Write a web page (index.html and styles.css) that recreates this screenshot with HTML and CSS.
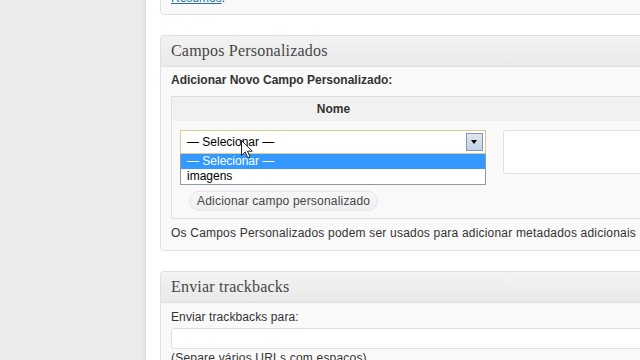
FILE: index.html
```html
<!DOCTYPE html>
<html lang="pt-BR">
<head>
  <meta charset="UTF-8">
  <meta name="viewport" content="width=device-width, initial-scale=1.0">
  <title>Editar Post ‹ Painel</title>
  <link rel="stylesheet" href="styles.css">
</head>
<body>
  <div class="admin">
    <!-- ======= Menu lateral (recolhido à esquerda) ======= -->
    <div class="sidebar"></div>

    <!-- ======= Área de conteúdo ======= -->
    <div class="content">
      <!-- fim do box anterior (Resumos) -->
      <div class="postbox postbox-first">
        <div class="inside">
          <p><a href="#">Resumos</a>.</p>
        </div>
      </div>

      <!-- Campos Personalizados -->
      <div class="postbox">
        <h3 class="hndle">Campos Personalizados</h3>
        <div class="inside">
          <p class="new-field"><strong>Adicionar Novo Campo Personalizado:</strong></p>
          <table class="meta-table">
            <colgroup>
              <col class="col-name">
              <col class="col-value">
            </colgroup>
            <thead>
              <tr>
                <th>Nome</th>
                <th>Valor</th>
              </tr>
            </thead>
            <tbody>
              <tr>
                <td class="cell-select">
                  <!-- select aberto (lista visível) -->
                  <div class="fake-select">
                    <span class="select-text">— Selecionar —</span>
                    <span class="select-arrow"></span>
                    <ul class="select-list">
                      <li class="active">— Selecionar —</li>
                      <li>imagens</li>
                    </ul>
                  </div>
                </td>
                <td class="cell-value"><textarea id="metavalue"></textarea></td>
              </tr>
              <tr>
                <td colspan="2" class="cell-submit">
                  <button class="button" type="button">Adicionar campo personalizado</button>
                </td>
              </tr>
            </tbody>
          </table>
          <p class="desc">Os Campos Personalizados podem ser usados para adicionar metadados adicionais aos posts que você poderá usar no seu tema.</p>
        </div>
      </div>

      <!-- Enviar trackbacks -->
      <div class="postbox">
        <h3 class="hndle">Enviar trackbacks</h3>
        <div class="inside">
          <label for="trackback_url">Enviar trackbacks para:</label>
          <input type="text" id="trackback_url" class="trackback-input">
          <p class="hint">(Separe vários URLs com espaços)</p>
        </div>
      </div>
    </div>

    <!-- ponteiro do mouse sobre o select -->
    <svg class="cursor" width="13" height="19" viewBox="0 0 13 19">
      <path d="M0.5 0.5 L0.5 15.5 L4.2 12 L6.8 17.8 L9 16.8 L6.5 11.2 L11.3 11.2 Z" fill="#fff" stroke="#222" stroke-width="1" stroke-linejoin="round"/>
    </svg>
  </div>
</body>
</html>
```

FILE: styles.css
```css
/* ======= Reset & fonte base ======= */
* {
  box-sizing: border-box;
  margin: 0;
  padding: 0;
}

html, body {
  width: 100%;
  height: 100%;
  overflow: hidden;
  background: #fff;
  color: #333;
  font-family: "Liberation Sans", Arial, sans-serif;
  font-size: 12px;
  line-height: 18px;
}

.admin {
  position: relative;
  display: flex;
  width: 960px;
  height: 100%;
}

/* ======= Menu lateral ======= */
.sidebar {
  flex: 0 0 146px;
  background: linear-gradient(to right, #ececec 0, #ececec 141px, #e2e2e2 145px, #d9d9d9 146px);
}

/* ======= Conteúdo ======= */
.content {
  flex: 1;
  padding-left: 14px;
}

.postbox {
  width: 760px;
  margin-bottom: 20px;
  background: #f9f9f9;
  border: 1px solid #dfdfdf;
  border-radius: 4px;
}
.postbox-first {
  margin-top: -19px;
}
.postbox-first .inside {
  padding: 7px 10px 7px;
}
.postbox-first a {
  color: #21759b;
}

.hndle {
  height: 31px;
  padding-left: 10px;
  font-family: "Liberation Serif", Georgia, serif;
  font-size: 16px;
  font-weight: normal;
  line-height: 30px;
  letter-spacing: 0.2px;
  color: #464646;
  background: linear-gradient(to bottom, #f3f3f3, #e9e9e9);
  border-bottom: 1px solid #dfdfdf;
  border-radius: 4px 4px 0 0;
}

.inside {
  padding: 4px 10px 8px;
}

.new-field {
  margin-bottom: 7px;
}
.new-field strong {
  color: #333;
}

/* ======= Tabela de campos ======= */
.meta-table {
  width: 741px;
  table-layout: fixed;
  border-collapse: separate;
  border-spacing: 0;
  border: 1px solid #dfdfdf;
  background: #f9f9f9;
}
.col-name {
  width: 323px;
}
.col-value {
  width: 416px;
}
.meta-table th {
  height: 24px;
  line-height: 24px;
  font-weight: bold;
  text-align: center;
  color: #333;
  background: #f1f1f1;
}
.cell-select,
.cell-value {
  padding: 9px 8px 8px;
  vertical-align: top;
}
.cell-submit {
  padding: 9px 8px 7px 17px;
}

/* select aberto */
.fake-select {
  position: relative;
  display: flex;
  align-items: center;
  width: 306px;
  height: 24px;
  padding: 0 2px 0 6px;
  background: #fff;
  border: 1px solid #d9cc97;
  line-height: 22px;
  color: #000;
}
.select-arrow {
  position: relative;
  width: 17px;
  height: 18px;
  margin-left: auto;
  background: linear-gradient(to bottom, #dde6f2, #c4d2e5);
  border: 1px solid #8797b0;
}
.select-arrow::after {
  content: "";
  position: absolute;
  left: 4px;
  top: 6px;
  border-left: 3.5px solid transparent;
  border-right: 3.5px solid transparent;
  border-top: 4px solid #000;
}
.select-list {
  position: absolute;
  top: calc(100% + 1px);
  left: -1px;
  right: -1px;
  list-style: none;
  background: #fff;
  border: 1px solid #8e9aa6;
  border-top: none;
  z-index: 2;
}
.select-list li {
  height: 15px;
  padding-left: 6px;
  line-height: 15px;
  color: #000;
}
.select-list li.active {
  background: #3399ff;
  color: #fff;
}

.cell-value textarea {
  display: block;
  width: 100%;
  height: 44px;
  background: #fff;
  border: 1px solid #dfdfdf;
  border-radius: 3px;
  resize: none;
}

/* ======= Botão ======= */
.button {
  height: 20px;
  padding: 0 7px;
  font-family: "Liberation Sans", Arial, sans-serif;
  font-size: 12px;
  line-height: 18px;
  letter-spacing: 0.2px;
  color: #464646;
  background: linear-gradient(to bottom, #f7f7f7, #efefef);
  border: 1px solid #e6e6e6;
  border-radius: 11px;
  cursor: pointer;
}

.desc {
  margin-top: 5px;
  white-space: nowrap;
  letter-spacing: 0.2px;
  color: #333;
}

/* ======= Trackbacks ======= */
.inside label {
  display: block;
  margin-top: 1px;
  letter-spacing: 0.1px;
  color: #333;
}
.trackback-input {
  display: block;
  width: 100%;
  height: 21px;
  margin-top: 2px;
  background: #fff;
  border: 1px solid #dfdfdf;
  border-radius: 3px;
}
.hint {
  letter-spacing: 0.2px;
  color: #333;
}

/* ======= Ponteiro do mouse ======= */
.cursor {
  position: absolute;
  left: 241px;
  top: 140px;
  z-index: 5;
}
```
